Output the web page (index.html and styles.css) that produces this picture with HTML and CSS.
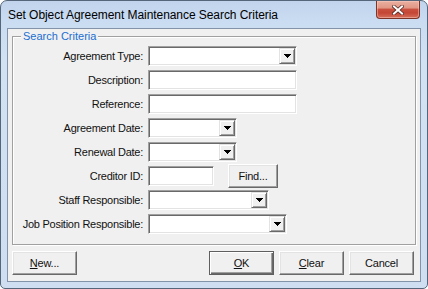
FILE: index.html
```html
<!DOCTYPE html>
<html>
<head>
<meta charset="utf-8">
<link rel="stylesheet" href="styles.css">
</head>
<body>
<div class="window">
  <div class="titlebar">
    <span class="title">Set Object Agreement Maintenance Search Criteria</span>
    <div class="close">
      <svg width="12" height="10" viewBox="0 0 12 10">
        <path d="M2 1.5 L10 8.5 M10 1.5 L2 8.5" stroke="#5a2a24" stroke-width="3.6" stroke-linecap="square"/>
        <path d="M2 1.5 L10 8.5 M10 1.5 L2 8.5" stroke="#ffffff" stroke-width="2" stroke-linecap="square"/>
      </svg>
    </div>
  </div>
  <div class="client">
    <fieldset class="group">
      <legend>Search Criteria</legend>
      <div class="form">
        <label>Agreement Type:</label>
        <div class="field combo w149"><span class="drop"><svg width="7" height="4" viewBox="0 0 7 4" shape-rendering="crispEdges"><rect x="0" y="0" width="7" height="1"/><rect x="1" y="1" width="5" height="1"/><rect x="2" y="2" width="3" height="1"/><rect x="3" y="3" width="1" height="1"/></svg></span></div>

        <label>Description:</label>
        <div class="field w149"></div>

        <label>Reference:</label>
        <div class="field w149"></div>

        <label>Agreement Date:</label>
        <div class="field combo w89"><span class="drop"><svg width="7" height="4" viewBox="0 0 7 4" shape-rendering="crispEdges"><rect x="0" y="0" width="7" height="1"/><rect x="1" y="1" width="5" height="1"/><rect x="2" y="2" width="3" height="1"/><rect x="3" y="3" width="1" height="1"/></svg></span></div>

        <label>Renewal Date:</label>
        <div class="field combo w89"><span class="drop"><svg width="7" height="4" viewBox="0 0 7 4" shape-rendering="crispEdges"><rect x="0" y="0" width="7" height="1"/><rect x="1" y="1" width="5" height="1"/><rect x="2" y="2" width="3" height="1"/><rect x="3" y="3" width="1" height="1"/></svg></span></div>

        <label>Creditor ID:</label>
        <div class="inline">
          <div class="field w66"></div>
          <button class="btn find">Find...</button>
        </div>

        <label>Staff Responsible:</label>
        <div class="field combo w121"><span class="drop"><svg width="7" height="4" viewBox="0 0 7 4" shape-rendering="crispEdges"><rect x="0" y="0" width="7" height="1"/><rect x="1" y="1" width="5" height="1"/><rect x="2" y="2" width="3" height="1"/><rect x="3" y="3" width="1" height="1"/></svg></span></div>

        <label>Job Position Responsible:</label>
        <div class="field combo w139"><span class="drop"><svg width="7" height="4" viewBox="0 0 7 4" shape-rendering="crispEdges"><rect x="0" y="0" width="7" height="1"/><rect x="1" y="1" width="5" height="1"/><rect x="2" y="2" width="3" height="1"/><rect x="3" y="3" width="1" height="1"/></svg></span></div>
      </div>
    </fieldset>
    <div class="actions">
      <button class="btn"><u>N</u>ew...</button>
      <span class="spacer"></span>
      <button class="btn default"><u>O</u>K</button>
      <button class="btn"><u>C</u>lear</button>
      <button class="btn">Cancel</button>
    </div>
  </div>
</div>
</body>
</html>
```

FILE: styles.css
```css
html, body {
  margin: 0;
  padding: 0;
  background: #ffffff;
}

body {
  font-family: "Liberation Sans", Arial, sans-serif;
  font-size: 11px;
  color: #000;
}

.window {
  width: 428px;
  height: 289px;
  box-sizing: border-box;
  border: 1px solid #55667a;
  border-radius: 7px 7px 5px 5px;
  background: linear-gradient(#c1d4ec 0px, #cadcf1 20px, #d2e2f3 60px, #cfdff1 289px);
  padding: 0 6px 6px;
  display: flex;
  flex-direction: column;
}

.titlebar {
  height: 27px;
  display: flex;
  align-items: flex-start;
}

.title {
  font-size: 12px;
  line-height: 14px;
  margin-top: 7px;
  margin-left: 1px;
  letter-spacing: -0.06px;
  color: #000;
  white-space: nowrap;
}

.close {
  margin-left: auto;
  margin-right: 1px;
  width: 44px;
  height: 18px;
  box-sizing: border-box;
  border: 1px solid #7d3328;
  border-top: none;
  border-radius: 0 0 4px 4px;
  background: linear-gradient(#e9b0a2 0%, #e29785 40%, #c94f3e 50%, #c44634 70%, #d5705c 100%);
  box-shadow: inset 0 0 0 1px rgba(255, 210, 200, 0.45);
  display: flex;
  align-items: center;
  justify-content: center;
}

.close svg {
  display: block;
}

.client {
  flex: 1;
  border: 1px solid #8394aa;
  background: #f0f0f0;
  display: flex;
  flex-direction: column;
}

.group {
  margin: 1px 4px 0;
  padding: 3px 0 10px 0;
  border: 1px solid #a0a0a0;
  box-shadow: inset 1px 1px 0 #fff, 1px 1px 0 #fff;
  min-width: 0;
}

.group legend {
  margin-left: 8px;
  padding: 0 2px;
  font-size: 11px;
  line-height: 13px;
  color: #1a6ed0;
  background: #f0f0f0;
}

.form {
  display: grid;
  grid-template-columns: 130px auto;
  grid-auto-rows: 20px;
  column-gap: 5px;
  row-gap: 4px;
  align-items: center;
  justify-items: start;
}

.form label {
  justify-self: end;
  white-space: nowrap;
  line-height: 13px;
  letter-spacing: -0.25px;
  color: #111;
}

.field {
  box-sizing: border-box;
  height: 20px;
  border: 1px solid;
  border-color: #a0a0a0 #ffffff #ffffff #a0a0a0;
  box-shadow: inset 1px 1px 0 #696969, inset -1px -1px 0 #e3e3e3;
  background: #ffffff;
}

.combo {
  padding: 1px;
  display: flex;
  justify-content: flex-end;
}

.drop {
  width: 16px;
  height: 16px;
  box-sizing: border-box;
  border: 1px solid;
  border-color: #e3e3e3 #696969 #696969 #e3e3e3;
  box-shadow: inset 1px 1px 0 #ffffff, inset -1px -1px 0 #a0a0a0;
  background: #f0f0f0;
  display: flex;
  align-items: center;
  justify-content: center;
}

.drop svg {
  display: block;
  fill: #000;
}

.w149 { width: 149px; }
.w89 { width: 89px; }
.w66 { width: 66px; }
.w121 { width: 121px; }
.w139 { width: 139px; }

.inline {
  display: flex;
  align-items: center;
  gap: 14px;
}

.btn {
  box-sizing: border-box;
  width: 65px;
  height: 24px;
  margin: 0;
  padding: 0;
  border: 1px solid;
  border-color: #ffffff #696969 #696969 #ffffff;
  box-shadow: inset -1px -1px 0 #a0a0a0, inset 1px 1px 0 #e3e3e3;
  background: #f0f0f0;
  font-family: "Liberation Sans", Arial, sans-serif;
  font-size: 11px;
  letter-spacing: -0.2px;
  color: #111;
  line-height: 13px;
}

.btn u {
  text-decoration-thickness: 1px;
  text-underline-offset: 1px;
}

.btn.find {
  width: 50px;
  margin: -2px 0;
}

.btn.default {
  border-color: #5f5f5f;
  box-shadow: inset 1px 1px 0 #ffffff, inset -1px -1px 0 #696969, inset -2px -2px 0 #a0a0a0;
}

.actions {
  margin-top: 6px;
  padding: 0 6px 0 4px;
  display: flex;
  gap: 5px;
}

.spacer {
  flex: 1;
}
```
